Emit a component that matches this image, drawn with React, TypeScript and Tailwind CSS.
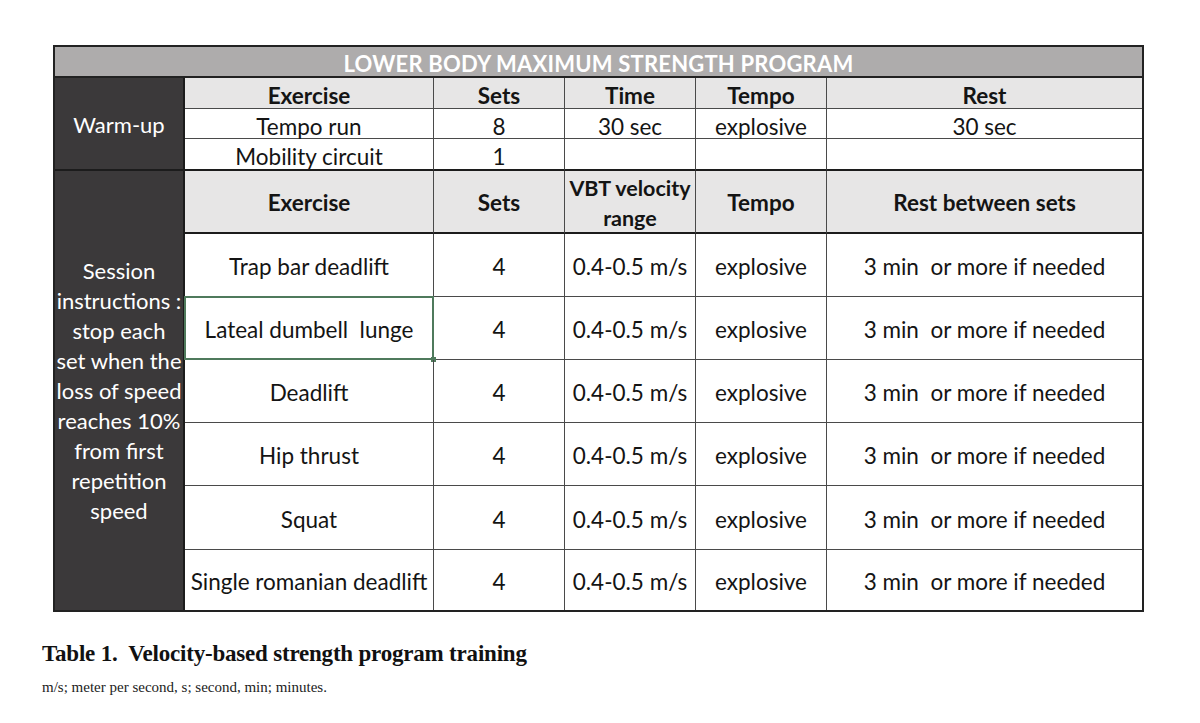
import React from "react";

const F = { fontFamily: "Lato, 'Open Sans', sans-serif" };

const data = [
  "Trap bar deadlift",
  "Lateal dumbell  lunge",
  "Deadlift",
  "Hip thrust",
  "Squat",
  "Single romanian deadlift",
];

function Cell({
  children,
  className = "",
}: {
  children?: React.ReactNode;
  className?: string;
}) {
  return (
    <div
      className={
        "flex items-center justify-center text-center whitespace-pre leading-[30px] " +
        className
      }
    >
      {children}
    </div>
  );
}

const H = "bg-[#e7e6e6] font-bold pt-[6px] border-[#4a4a4a] ";
const R = "pt-[6px] border-[#4a4a4a] ";
const D = "pt-[4px] border-[#4a4a4a] ";

export default function App() {
  return (
    <div className="w-[1200px] h-[723px] bg-white overflow-hidden relative">
      <div className="pt-[45px] pl-[53px]">
        <div
          className="w-[1091px] border-2 border-[#222] text-[#141414] text-[22.5px] grid grid-cols-[130px_249px_131px_131px_131px_315px] grid-rows-[31px_31px_30px_32px_63px_63px_63px_63px_63px_64px_60px]"
          style={F}
        >
          {/* title */}
          <Cell className="col-span-6 bg-[#aeacac] text-white text-[22px] font-bold pt-[4px] border-b-2 border-[#222] tracking-[0.2px]">
            LOWER BODY MAXIMUM STRENGTH PROGRAM
          </Cell>

          {/* warm-up dark cell */}
          <Cell className="row-span-3 bg-[#3b393a] text-white text-[22px] pt-[2px] border-r-2 border-b-2 border-[#1c1c1c]">
            Warm-up
          </Cell>
          <Cell className={H + "border-r-[1.5px] border-b-[1.5px]"}>Exercise</Cell>
          <Cell className={H + "border-r-[1.5px] border-b-[1.5px]"}>Sets</Cell>
          <Cell className={H + "border-r-[1.5px] border-b-[1.5px]"}>Time</Cell>
          <Cell className={H + "border-r-[1.5px] border-b-[1.5px]"}>Tempo</Cell>
          <Cell className={H + "border-b-[1.5px]"}>Rest</Cell>

          <Cell className={R + "border-r-[1.5px] border-b-[1.5px]"}>Tempo run</Cell>
          <Cell className={R + "border-r-[1.5px] border-b-[1.5px]"}>8</Cell>
          <Cell className={R + "border-r-[1.5px] border-b-[1.5px]"}>30 sec</Cell>
          <Cell className={R + "border-r-[1.5px] border-b-[1.5px]"}>explosive</Cell>
          <Cell className={R + "border-b-[1.5px]"}>30 sec</Cell>

          <Cell className="pt-[6px] border-r-[1.5px] border-b-2 border-r-[#4a4a4a] border-b-[#1c1c1c]">Mobility circuit</Cell>
          <Cell className="pt-[6px] border-r-[1.5px] border-b-2 border-r-[#4a4a4a] border-b-[#1c1c1c]">1</Cell>
          <Cell className="border-r-[1.5px] border-b-2 border-r-[#4a4a4a] border-b-[#1c1c1c]"></Cell>
          <Cell className="border-r-[1.5px] border-b-2 border-r-[#4a4a4a] border-b-[#1c1c1c]"></Cell>
          <Cell className="border-b-2 border-[#1c1c1c]"></Cell>

          {/* session dark cell */}
          <Cell className="row-span-7 bg-[#3b393a] text-white text-[22px] border-r-2 border-[#1c1c1c]">
            {"Session\ninstructions :\nstop each\nset when the\nloss of speed\nreaches 10%\nfrom first\nrepetition\nspeed"}
          </Cell>
          <Cell className="bg-[#e7e6e6] font-bold pt-[3px] border-r-[1.5px] border-b-2 border-r-[#4a4a4a] border-b-[#1c1c1c]">Exercise</Cell>
          <Cell className="bg-[#e7e6e6] font-bold pt-[3px] border-r-[1.5px] border-b-2 border-r-[#4a4a4a] border-b-[#1c1c1c]">Sets</Cell>
          <Cell className="bg-[#e7e6e6] font-bold text-[21.5px] pt-[2px] border-r-[1.5px] border-b-2 border-r-[#4a4a4a] border-b-[#1c1c1c]">{"VBT velocity\nrange"}</Cell>
          <Cell className="bg-[#e7e6e6] font-bold pt-[3px] border-r-[1.5px] border-b-2 border-r-[#4a4a4a] border-b-[#1c1c1c]">Tempo</Cell>
          <Cell className="bg-[#e7e6e6] font-bold pt-[3px] border-b-2 border-[#1c1c1c]">Rest between sets</Cell>

          {data.map((name, i) => {
            const last = i === data.length - 1;
            const b = last ? "" : "border-b-[1.5px] ";
            return (
              <React.Fragment key={name}>
                <Cell className={"relative border-r-[1.5px] " + D + b}>
                  {name}
                  {i === 1 && (
                    <>
                      <div className="absolute -inset-[1px] border-2 border-[#4f7a5c] pointer-events-none" />
                      <div className="absolute -right-[3px] -bottom-[3px] w-[5px] h-[5px] bg-[#4f7a5c]" />
                    </>
                  )}
                </Cell>
                <Cell className={"border-r-[1.5px] " + D + b}>4</Cell>
                <Cell className={"border-r-[1.5px] " + D + b}>0.4-0.5 m/s</Cell>
                <Cell className={"border-r-[1.5px] " + D + b}>explosive</Cell>
                <Cell className={D + b}>3 min  or more if needed</Cell>
              </React.Fragment>
            );
          })}
        </div>
      </div>

      <div className="pl-[42px] mt-[27px] text-[23px] leading-[30px] font-bold text-[#111] whitespace-pre tracking-[-0.2px]" style={{ fontFamily: "'Liberation Serif', serif" }}>
        {"Table 1.  Velocity-based strength program training"}
      </div>
      <div className="pl-[42px] mt-[8px] text-[15px] leading-[20px] text-[#222]" style={{ fontFamily: "'Liberation Serif', serif" }}>
        m/s; meter per second, s; second, min; minutes.
      </div>
    </div>
  );
}
